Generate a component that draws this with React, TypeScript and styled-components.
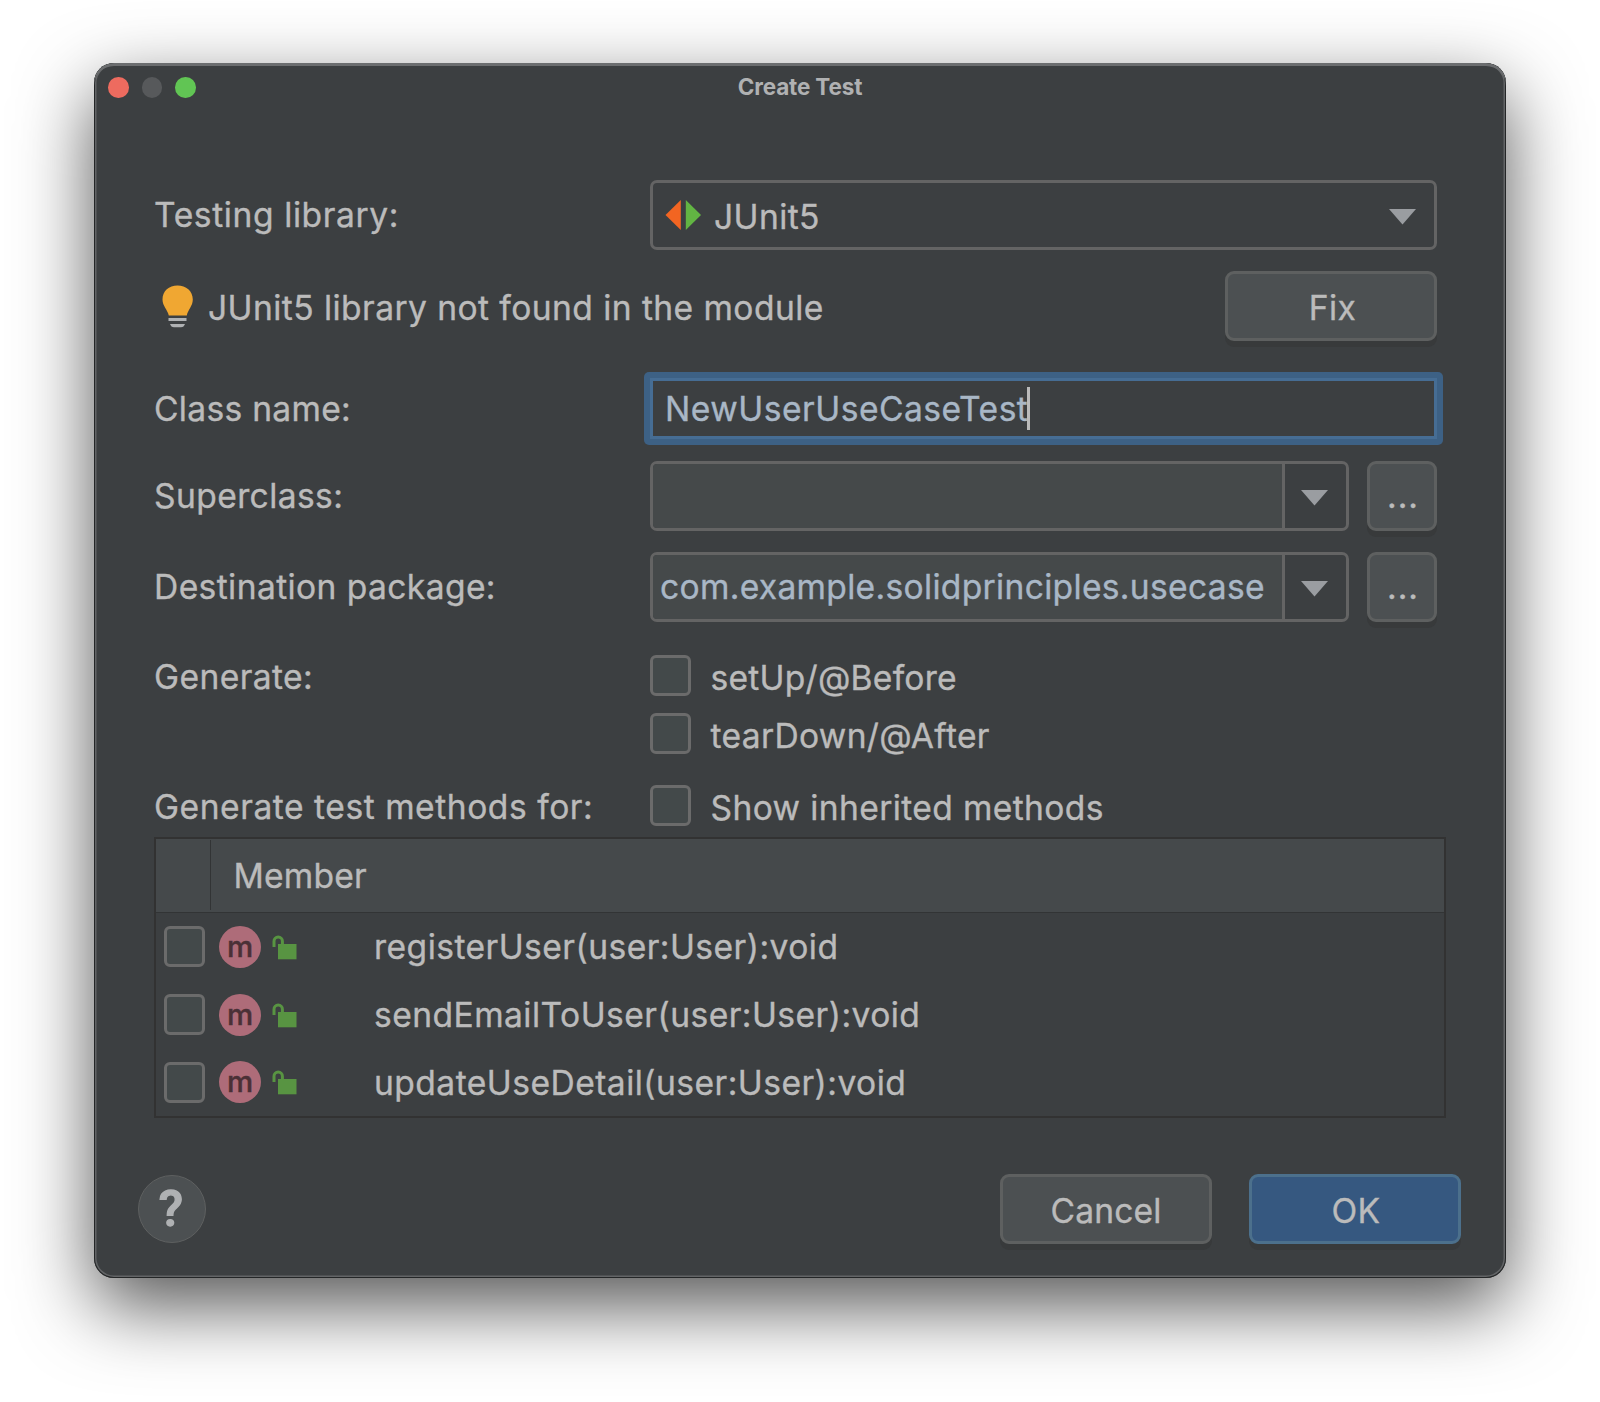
import React from "react";
import styled, { createGlobalStyle } from "styled-components";

const GlobalStyle = createGlobalStyle`
  * { box-sizing: border-box; }
  body { margin: 0; background: #fff; }
`;

const Desktop = styled.main`
  width: 1600px;
  height: 1402px;
  overflow: hidden;
  padding: 63px 94px 0;
  background: #fff;
  font-family: Inter, "Liberation Sans", sans-serif;
  font-size: 33.6px;
  line-height: 40px;
  color: #bbbbbb;
`;

const Window = styled.section`
  width: 1412px;
  height: 1215px;
  display: flex;
  flex-direction: column;
  border-radius: 20px;
  background: #3c3f41;
  box-shadow:
    inset 0 3px 0 #6b6d6f,
    inset 0 0 0 1px #242627,
    inset 0 0 0 2.5px #626466,
    0 28px 76px rgba(0, 0, 0, 0.67);
`;

const TitleBar = styled.header`
  height: 49px;
  display: grid;
  grid-template-columns: 1fr auto 1fr;
  align-items: center;
  padding: 0 14px;
`;

const Lights = styled.div`
  display: flex;
  gap: 13px;
`;

const Light = styled.span<{ $color: string }>`
  width: 20.7px;
  height: 20.7px;
  border-radius: 50%;
  background: ${(p) => p.$color};
`;

const Title = styled.h1`
  margin: 0;
  padding-bottom: 1px;
  font-size: 22.5px;
  line-height: 28px;
  font-weight: 700;
  letter-spacing: -0.15px;
  color: #b0b1b2;
`;

const Body = styled.div`
  display: flex;
  flex-direction: column;
  padding: 68px 60px 0;
`;

const Row = styled.div<{ $gap?: number; $height: number }>`
  display: flex;
  align-items: center;
  margin-top: ${(p) => p.$gap ?? 0}px;
  height: ${(p) => p.$height}px;
`;

const Text = styled.span<{ $track?: number; $drop?: number; $indent?: number }>`
  white-space: pre;
  letter-spacing: ${(p) => p.$track ?? 0.4}px;
  margin-top: ${(p) => (p.$drop ?? 0) * 2}px;
  margin-left: ${(p) => p.$indent ?? 0}px;
  -webkit-text-stroke: 0.35px currentColor;
`;

const LabelCell = styled.div`
  width: 496px;
  flex: none;
  display: flex;
  align-items: center;
`;

const Select = styled.div`
  width: 787px;
  height: 70px;
  display: flex;
  align-items: center;
  gap: 13px;
  padding: 0 18px 0 12px;
  border: 3px solid #646464;
  border-radius: 7px;
`;

const SelectArrow = styled.span`
  display: flex;
  padding-top: 4px;
`;

const Spacer = styled.div`
  flex: 1;
`;

const Button = styled.button<{ $primary?: boolean; $width?: number }>`
  width: ${(p) => p.$width ?? 212}px;
  height: 70px;
  flex: none;
  display: flex;
  align-items: center;
  justify-content: center;
  padding: 0;
  font: inherit;
  color: #bbbbbb;
  border: 3px solid ${(p) => (p.$primary ? "#4c708c" : "#5e6060")};
  border-radius: 9px;
  background: ${(p) => (p.$primary ? "#365880" : "#4c5052")};
  box-shadow: 0 6px 0 #383a3b;
`;

const Hint = styled.div`
  width: 1071px;
  display: flex;
  align-items: center;
  padding-left: 8px;
  gap: 15px;
`;

const FocusRing = styled.div`
  width: 799px;
  height: 73px;
  margin: -6px;
  padding: 6px;
  border-radius: 5px;
  background: #3d6185;
`;

const TextField = styled.div`
  height: 61px;
  display: flex;
  align-items: center;
  padding-left: 12px;
  border: 3px solid #466d94;
  background: #3c3f41;
  color: #a9b7c6;
`;

const Caret = styled.span`
  width: 3px;
  height: 43px;
  margin-left: -1px;
  background: #bbbbbb;
`;

const EditableCombo = styled.div`
  width: 699px;
  height: 70px;
  display: flex;
  margin-right: 18px;
  border: 3px solid #646464;
  border-radius: 7px;
  overflow: hidden;
`;

const ComboValue = styled.div`
  flex: 1;
  display: flex;
  align-items: center;
  padding-left: 7px;
  border-right: 3px solid #646464;
  background: #45494a;
  color: #a9b7c6;
`;

const ComboArrow = styled.div`
  width: 61px;
  display: flex;
  align-items: center;
  justify-content: center;
  padding-top: 3px;
  padding-right: 3px;
`;

const Checkbox = styled.span`
  width: 41px;
  height: 41px;
  flex: none;
  border: 3px solid #6b6b6b;
  border-radius: 6px;
  background: #43494a;
`;

const CheckLabel = styled.label`
  display: flex;
  align-items: center;
  gap: 19.5px;
`;

const Table = styled.div`
  width: 1292px;
  height: 281px;
  margin-top: 11px;
  border: 2px solid #323232;
`;

const TableHead = styled.div`
  height: 74px;
  display: flex;
  padding: 1px 0 2px;
  border-bottom: 1px solid #323435;
  background: #45494b;
`;

const HeadGutter = styled.div`
  width: 55px;
  border-right: 1px solid #323435;
`;

const HeadCell = styled.div`
  flex: 1;
  display: flex;
  align-items: center;
  padding-left: 22.5px;
`;

const TableBody = styled.div`
  display: flex;
  flex-direction: column;
`;

const MemberRow = styled.div`
  height: 67.7px;
  display: flex;
  align-items: center;
  padding-left: 8px;
`;

const MethodBadge = styled.span`
  width: 42px;
  height: 42px;
  margin-left: 14px;
  border-radius: 50%;
  background: #ae6c79;
  color: #4a3036;
  font-size: 29.5px;
  font-weight: 500;
  line-height: 40px;
  text-align: center;
  -webkit-text-stroke: 0.4px currentColor;
`;

const LockSlot = styled.span`
  width: 113px;
  display: flex;
  padding: 1px 0 0 11px;
`;

const Footer = styled.footer`
  display: flex;
  align-items: center;
  gap: 37px;
  margin-top: 56px;
  padding: 0 45px 0 44px;
`;

const HelpButton = styled.button`
  width: 68px;
  height: 68px;
  padding: 0 2px 0 0;
  border: 1.5px solid #5e6060;
  border-radius: 50%;
  background: #4c5052;
  color: #afb1b3;
  font: 500 50px/60px Roboto, sans-serif;
  -webkit-text-stroke: 1.4px currentColor;
`;

const Arrow = () => (
  <svg width="27" height="16" viewBox="0 0 27 16">
    <path d="M0 0H27L13.5 15.5Z" fill="#9a9da1" />
  </svg>
);

const JUnitIcon = () => (
  <svg width="36" height="30" viewBox="0 0 36 30">
    <path d="M15.8 0V30L0.500 15Z" fill="#f26522" />
    <path d="M20.8 0V30L36 15Z" fill="#62b543" />
  </svg>
);

const BulbIcon = () => (
  <svg width="31" height="43" viewBox="0 0 31 43">
    <path
      d="M15.5 0.500C24 0.500 30.800 6 30.800 14.500C30.800 21 26 24.500 24.800 30.500H6.800C5.500 24.500 0.500 21 0.500 14.500C0.500 6 7 0.500 15.500 0.500Z"
      fill="#f0a732"
    />
    <path d="M6.500 33H24.500V36H6.500ZM8 39H23C22.300 41 21 42.300 19 42.300H12C10 42.300 8.700 41 8 39Z" fill="#afb1b3" />
  </svg>
);

const LockIcon = () => (
  <svg width="25" height="25" viewBox="0 0 25 25">
    <path d="M2 12V6.200A4.200 4.200 0 0 1 10.400 6.200V10" fill="none" stroke="#589442" strokeWidth="3" />
    <path d="M6 9H24.500V24.300H6Z" fill="#589442" />
  </svg>
);

const members = [
  "registerUser(user:User):void",
  "sendEmailToUser(user:User):void",
  "updateUseDetail(user:User):void",
];

export default function App() {
  return (
    <Desktop>
      <GlobalStyle />
      <Window>
        <TitleBar>
          <Lights>
            <Light $color="#ed6b5f" />
            <Light $color="#57595b" />
            <Light $color="#61c554" />
          </Lights>
          <Title>Create Test</Title>
        </TitleBar>
        <Body>
          <Row $height={70}>
            <LabelCell>
              <Text $track={0.6}>Testing library:</Text>
            </LabelCell>
            <Select>
              <JUnitIcon />
              <Text $drop={2}>JUnit5</Text>
              <Spacer />
              <SelectArrow><Arrow /></SelectArrow>
            </Select>
          </Row>
          <Row $height={70} $gap={21}>
            <Hint>
              <BulbIcon />
              <Text $track={0.43} $drop={1.5}>JUnit5 library not found in the module</Text>
            </Hint>
            <Button>
              <Text $drop={1.5} $indent={3}>Fix</Text>
            </Button>
          </Row>
          <Row $height={61} $gap={37}>
            <LabelCell>
              <Text $track={0.3}>Class name:</Text>
            </LabelCell>
            <FocusRing>
              <TextField>
                <Text $track={0.5}>NewUserUseCaseTest</Text>
                <Caret />
              </TextField>
            </FocusRing>
          </Row>
          <Row $height={70} $gap={22}>
            <LabelCell>
              <Text $drop={-0.5}>Superclass:</Text>
            </LabelCell>
            <EditableCombo>
              <ComboValue />
              <ComboArrow><Arrow /></ComboArrow>
            </EditableCombo>
            <Button $width={70}>
              <Text $track={1} $indent={2}>...</Text>
            </Button>
          </Row>
          <Row $height={70} $gap={21}>
            <LabelCell>
              <Text>Destination package:</Text>
            </LabelCell>
            <EditableCombo>
              <ComboValue>
                <Text $track={0.31}>com.example.solidprinciples.usecase</Text>
              </ComboValue>
              <ComboArrow><Arrow /></ComboArrow>
            </EditableCombo>
            <Button $width={70}>
              <Text $track={1} $indent={2}>...</Text>
            </Button>
          </Row>
          <Row $height={41} $gap={33}>
            <LabelCell>
              <Text $drop={1}>Generate:</Text>
            </LabelCell>
            <CheckLabel>
              <Checkbox />
              <Text $track={0.25} $drop={2}>setUp/@Before</Text>
            </CheckLabel>
          </Row>
          <Row $height={41} $gap={17}>
            <LabelCell />
            <CheckLabel>
              <Checkbox />
              <Text $track={0.33} $drop={2}>tearDown/@After</Text>
            </CheckLabel>
          </Row>
          <Row $height={41} $gap={31}>
            <LabelCell>
              <Text $track={0.54} $drop={1}>Generate test methods for:</Text>
            </LabelCell>
            <CheckLabel>
              <Checkbox />
              <Text $track={0.38} $drop={2.5}>Show inherited methods</Text>
            </CheckLabel>
          </Row>
          <Table>
            <TableHead>
              <HeadGutter />
              <HeadCell>
                <Text $track={0.2} $drop={1}>Member</Text>
              </HeadCell>
            </TableHead>
            <TableBody>
              {members.map((name) => (
                <MemberRow key={name}>
                  <Checkbox />
                  <MethodBadge>m</MethodBadge>
                  <LockSlot><LockIcon /></LockSlot>
                  <Text $track={0.46} $drop={0.5}>{name}</Text>
                </MemberRow>
              ))}
            </TableBody>
          </Table>
        </Body>
        <Footer>
          <HelpButton>?</HelpButton>
          <Spacer />
          <Button>
            <Text $track={0.15} $drop={1.5}>Cancel</Text>
          </Button>
          <Button $primary>
            <Text $drop={1.5} $indent={2}>OK</Text>
          </Button>
        </Footer>
      </Window>
    </Desktop>
  );
}
